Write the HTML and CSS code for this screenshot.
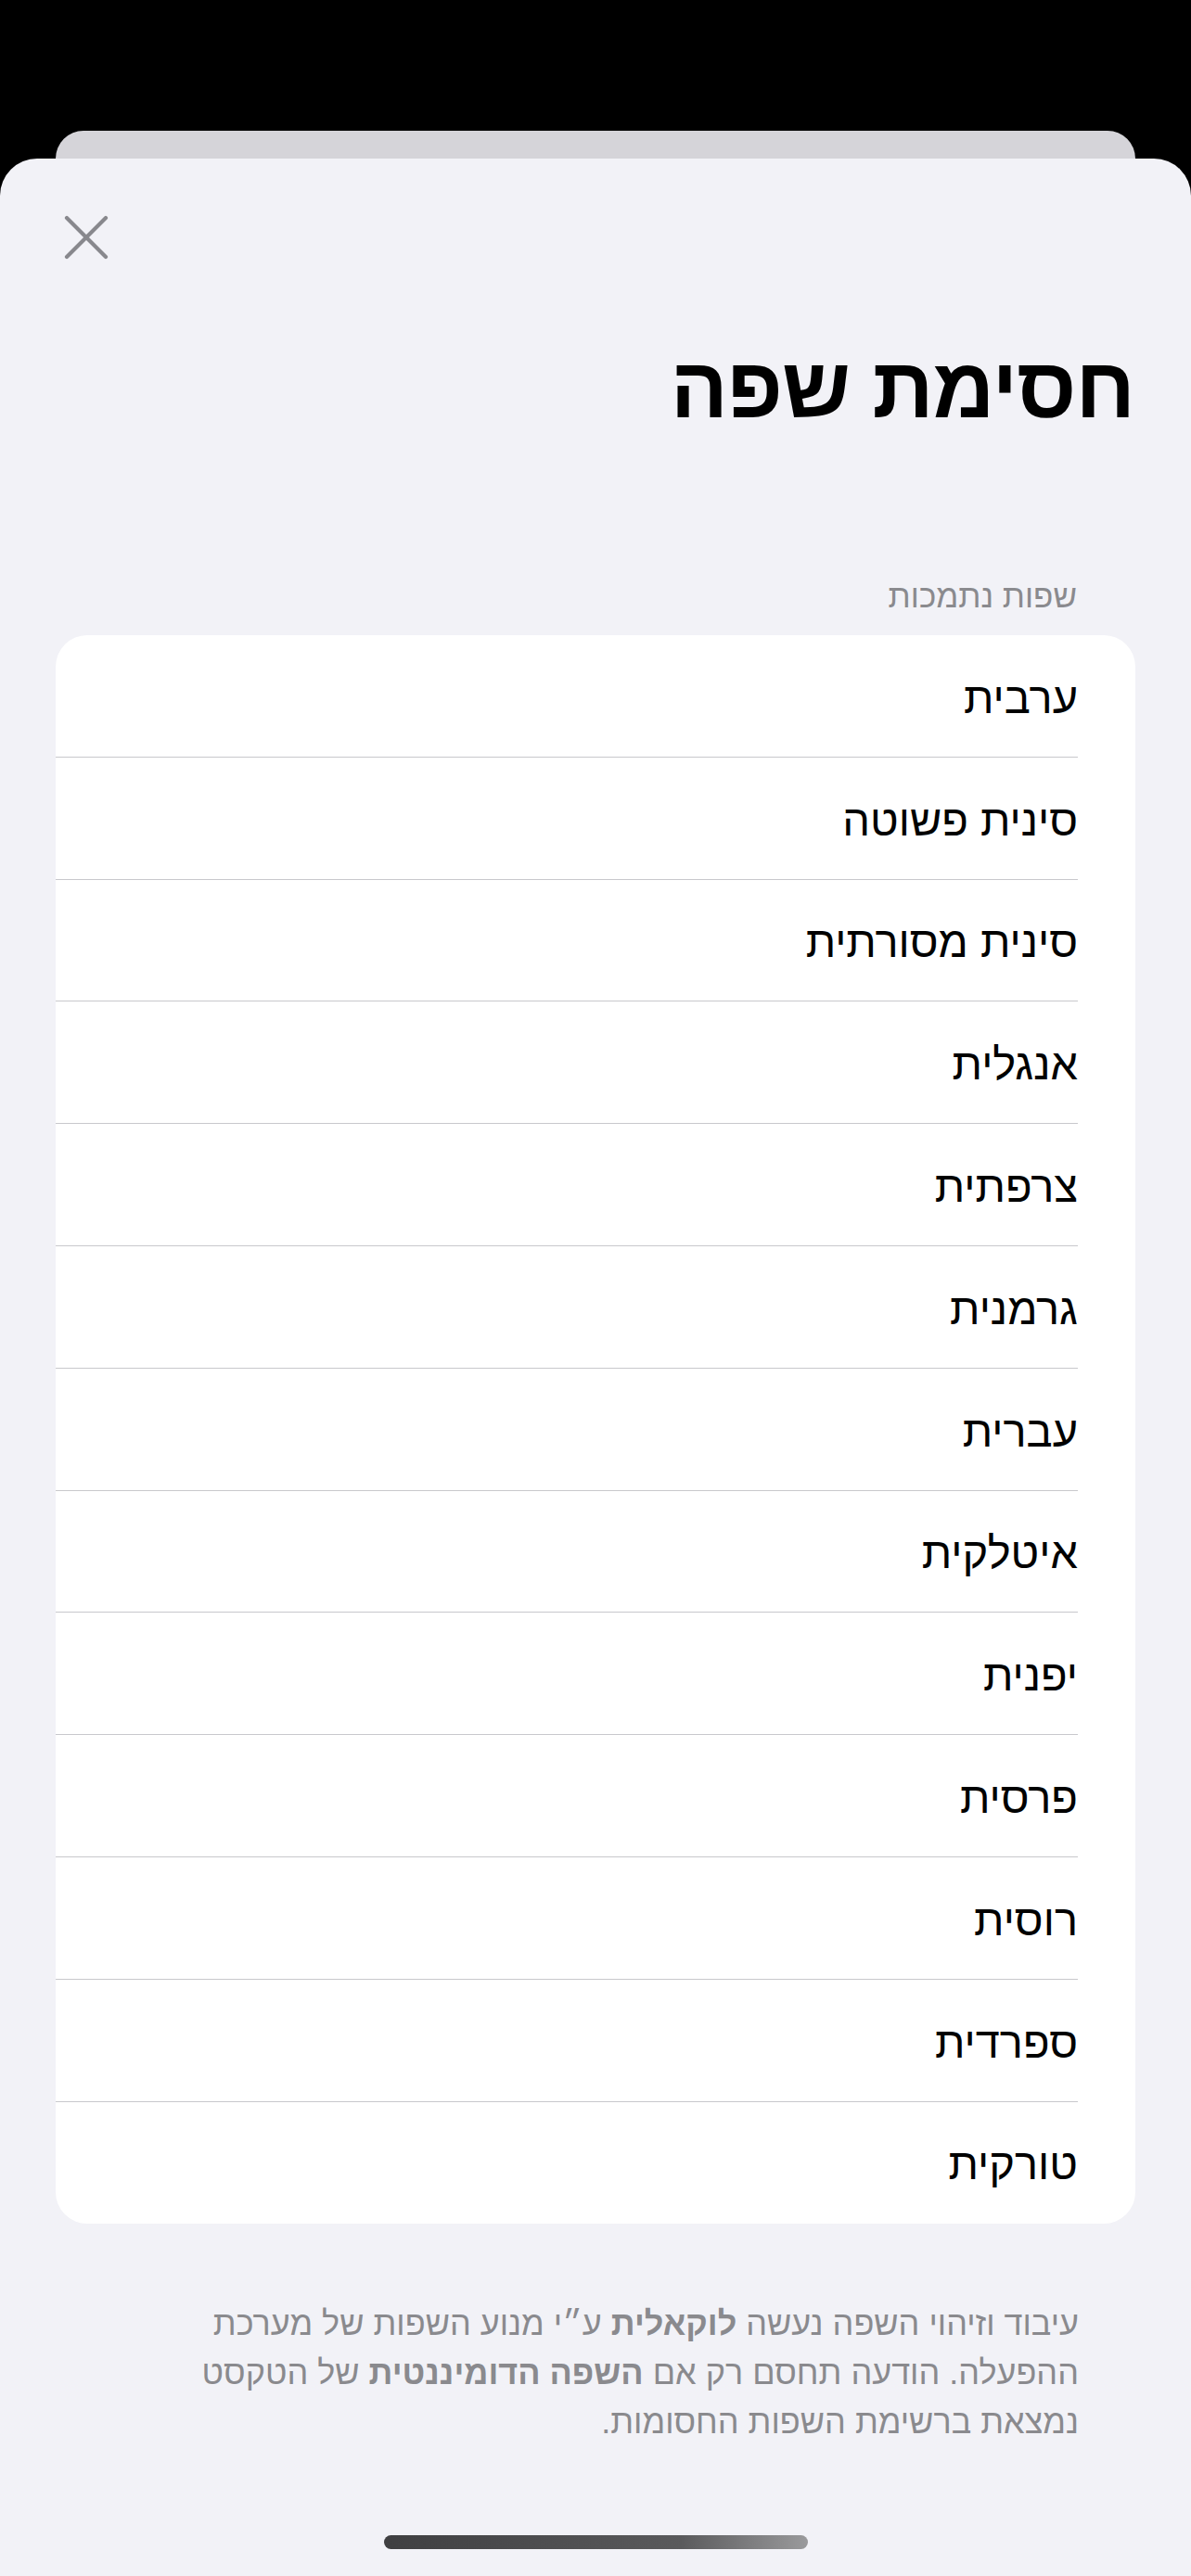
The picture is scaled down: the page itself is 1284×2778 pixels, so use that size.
FILE: index.html
```html
<!DOCTYPE html>
<html lang="he" dir="rtl">
<head>
<meta charset="utf-8">
<title>חסימת שפה</title>
<link rel="stylesheet" href="styles.css">
</head>
<body>
<div class="screen">
  <div class="back-card"></div>
  <main class="sheet">
    <div class="toolbar">
      <button class="close" aria-label="סגירה">
        <svg width="48" height="48" viewBox="0 0 48 48"><path d="M3 3 L45 45 M45 3 L3 45" stroke="#88888d" stroke-width="4.2" stroke-linecap="round" fill="none"/></svg>
      </button>
    </div>
    <h1 class="title">חסימת שפה</h1>
    <div class="section-header">שפות נתמכות</div>
    <ul class="list">
      <li class="row">ערבית</li>
      <li class="row">סינית פשוטה</li>
      <li class="row">סינית מסורתית</li>
      <li class="row">אנגלית</li>
      <li class="row">צרפתית</li>
      <li class="row">גרמנית</li>
      <li class="row">עברית</li>
      <li class="row">איטלקית</li>
      <li class="row">יפנית</li>
      <li class="row">פרסית</li>
      <li class="row">רוסית</li>
      <li class="row">ספרדית</li>
      <li class="row">טורקית</li>
    </ul>
    <p class="footer">עיבוד וזיהוי השפה נעשה <b>לוקאלית</b> ע״י מנוע השפות של מערכת<br>ההפעלה. הודעה תחסם רק אם <b>השפה הדומיננטית</b> של הטקסט<br>נמצאת ברשימת השפות החסומות.</p>
    <div class="home-indicator"></div>
  </main>
</div>
</body>
</html>
```
FILE: styles.css
```css
html, body {
  margin: 0;
  padding: 0;
  background: #000;
}
body {
  width: 1284px;
  height: 2778px;
  overflow: hidden;
  font-family: "Liberation Sans", "DejaVu Sans", sans-serif;
}
.screen {
  padding-top: 141px;
}
.back-card {
  margin: 0 60px;
  height: 30px;
  background: #d5d4d9;
  border-radius: 34px 34px 0 0;
}
.sheet {
  background: #f2f2f7;
  border-radius: 40px 40px 0 0;
  height: 2607px;
  display: flex;
  flex-direction: column;
  position: relative;
}
.toolbar {
  display: flex;
  direction: ltr;
  justify-content: flex-start;
  padding: 61px 0 0 69px;
}
.close {
  width: 48px;
  height: 48px;
  padding: 0;
  border: 0;
  background: none;
  display: block;
}
.close svg { display: block; }
.title {
  margin: 92px 61px 0 0;
  font-size: 92px;
  line-height: 1;
  font-weight: 700;
  color: #000;
  letter-spacing: -1px;
}
.section-header {
  margin: 161px 123px 0 0;
  font-size: 35px;
  line-height: 1;
  color: #8a8a8e;
}
.list {
  list-style: none;
  margin: 25px 60px 0;
  padding: 0;
  background: #fff;
  border-radius: 34px;
  overflow: hidden;
}
.row {
  display: flex;
  align-items: center;
  padding-right: 62px;
  padding-top: 3px;
  font-size: 47px;
  color: #000;
  background-image: linear-gradient(#c8c8cc, #c8c8cc);
  background-size: calc(100% - 62px) 1px;
  background-position: left bottom;
  background-repeat: no-repeat;
  height: 131.8px;
  box-sizing: border-box;
}
.row:last-child {
  background-image: none;
}
.footer {
  margin: 81px 121px 0 60px;
  font-size: 36px;
  line-height: 53px;
  color: #8a8a8e;
}
.footer b {
  font-weight: 700;
}
.home-indicator {
  position: absolute;
  left: 414px;
  top: 2563px;
  width: 457px;
  height: 15px;
  border-radius: 8px;
  background: linear-gradient(90deg, #3f3f41 0%, #5a5a5c 70%, #9a9a9c 100%);
}
```
